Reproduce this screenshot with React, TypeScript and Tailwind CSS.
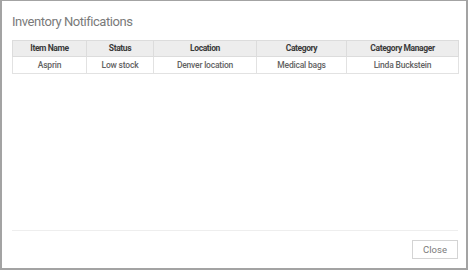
export default function App() {
  const headers = ["Item Name", "Status", "Location", "Category", "Category Manager"];
  const row = ["Asprin", "Low stock", "Denver location", "Medical bags", "Linda Buckstein"];
  const widths = ["w-[74px]", "w-[67px]", "w-[103px]", "w-[90px]", "w-[112px]"];
  return (
    <div className="w-[468px] h-[270px] bg-white border-l-2 border-r-2 border-t border-b-2 border-[#a3a3a3] flex flex-col font-['Roboto',sans-serif]">
      <div className="flex-1 pl-[10px] pr-[8px] pt-[13px]">
        <div className="text-[13px] leading-4 tracking-[-0.45px] text-[#7a7a7a]">Inventory Notifications</div>
        <table className="mt-[10px] w-[446px] table-fixed border-collapse">
          <colgroup>
            {widths.map((w, i) => (
              <col key={i} className={w} />
            ))}
          </colgroup>
          <thead>
            <tr className="bg-[#ededed]">
              {headers.map((h) => (
                <th
                  key={h}
                  className="h-[16px] p-0 border border-[#dcdcdc] text-[8.5px] leading-none font-bold tracking-[-0.4px] text-[#3a3a3a] text-center"
                >
                  {h}
                </th>
              ))}
            </tr>
          </thead>
          <tbody>
            <tr>
              {row.map((c) => (
                <td
                  key={c}
                  className="h-[17px] p-0 border border-[#e2e2e2] text-[8.5px] leading-none font-medium tracking-[-0.2px] text-[#626262] text-center"
                >
                  {c}
                </td>
              ))}
            </tr>
          </tbody>
        </table>
      </div>
      <div className="ml-[10px] mr-[8px] border-t border-[#eeeeee] pt-[9px] pb-[9px] flex justify-end">
        <button className="w-[46px] h-[19px] border border-[#d4d4d4] bg-white text-[9.5px] leading-none font-normal text-[#7a7a7a]">
          Close
        </button>
      </div>
    </div>
  );
}
